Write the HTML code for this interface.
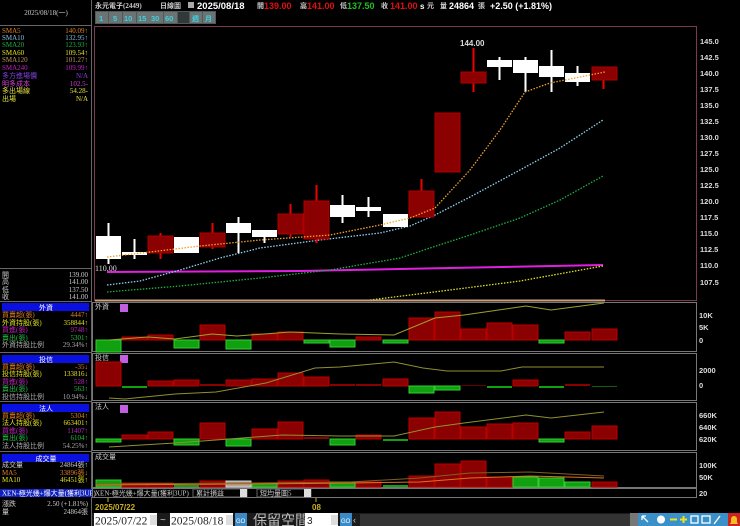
<!DOCTYPE html>
<html><head><meta charset="utf-8">
<style>
body{margin:0;background:#000;width:740px;height:526px;overflow:hidden;font-family:"Liberation Sans","Noto Sans CJK TC",sans-serif}
svg{position:absolute;left:0;top:0}
.s{font-family:"Liberation Serif","Noto Sans CJK TC",serif;font-size:7px}
</style></head><body>
<svg width="740" height="526" viewBox="0 0 740 526">
<rect x="0" y="0" width="740" height="526" fill="#000"/>
<line x1="91.5" y1="0" x2="91.5" y2="526" stroke="#666"/>
<line x1="0" y1="25.5" x2="91" y2="25.5" stroke="#666"/>
<text x="46" y="15" class="s" fill="#ccc" text-anchor="middle">2025/08/18(一)</text>
<g class="s">
<text x="2" y="33" fill="#e08020">SMA5</text><text x="88" y="33" fill="#e08020" text-anchor="end">140.09↑</text>
<text x="2" y="40" fill="#80c0e0">SMA10</text><text x="88" y="40" fill="#80c0e0" text-anchor="end">132.95↑</text>
<text x="2" y="47" fill="#20b040">SMA20</text><text x="88" y="47" fill="#20b040" text-anchor="end">123.93↑</text>
<text x="2" y="55" fill="#e0e020">SMA60</text><text x="88" y="55" fill="#e0e020" text-anchor="end">109.54↑</text>
<text x="2" y="62" fill="#c09060">SMA120</text><text x="88" y="62" fill="#c09060" text-anchor="end">101.27↑</text>
<text x="2" y="70" fill="#c020c0">SMA240</text><text x="88" y="70" fill="#c020c0" text-anchor="end">109.99↑</text>
<text x="2" y="78" fill="#8040e0">多方進場價</text><text x="88" y="78" fill="#8040e0" text-anchor="end">N/A</text>
<text x="2" y="86" fill="#d040d0">明多成本</text><text x="88" y="86" fill="#d040d0" text-anchor="end">102.5-</text>
<text x="2" y="93" fill="#e0e040">多出場線</text><text x="88" y="93" fill="#e0e040" text-anchor="end">54.28-</text>
<text x="2" y="101" fill="#e0e040">出場</text><text x="88" y="101" fill="#e0e040" text-anchor="end">N/A</text>
</g>
<line x1="0" y1="268.5" x2="91" y2="268.5" stroke="#666"/>
<g class="s" fill="#ccc">
<text x="2" y="277">開</text><text x="88" y="277" text-anchor="end">139.00</text>
<text x="2" y="284">高</text><text x="88" y="284" text-anchor="end">141.00</text>
<text x="2" y="292">低</text><text x="88" y="292" text-anchor="end">137.50</text>
<text x="2" y="299">收</text><text x="88" y="299" text-anchor="end">141.00</text>
</g>
<line x1="0" y1="301.5" x2="91" y2="301.5" stroke="#666"/>
<rect x="2" y="303" width="87" height="8" fill="#0a10e0"/><text x="46" y="310" class="s" fill="#fff" text-anchor="middle">外資</text>
<g class="s">
<text x="2" y="317" fill="#e08020">買賣超(張)</text><text x="88" y="317" fill="#e08020" text-anchor="end">4447↑</text>
<text x="2" y="325" fill="#e0e020">外資持股(張)</text><text x="88" y="325" fill="#e0e020" text-anchor="end">358844↑</text>
<text x="2" y="332" fill="#c020c0">買進(張)</text><text x="88" y="332" fill="#c020c0" text-anchor="end">9748↑</text>
<text x="2" y="340" fill="#20c040">賣出(張)</text><text x="88" y="340" fill="#20c040" text-anchor="end">5301↑</text>
<text x="2" y="347" fill="#aaa">外資持股比例</text><text x="88" y="347" fill="#aaa" text-anchor="end">29.34%↑</text>
</g>
<line x1="0" y1="352.5" x2="91" y2="352.5" stroke="#666"/>
<rect x="2" y="355" width="87" height="8" fill="#0a10e0"/><text x="46" y="362" class="s" fill="#fff" text-anchor="middle">投信</text>
<g class="s">
<text x="2" y="369" fill="#e08020">買賣超(張)</text><text x="88" y="369" fill="#e08020" text-anchor="end">-35↓</text>
<text x="2" y="376" fill="#e0e020">投信持股(張)</text><text x="88" y="376" fill="#e0e020" text-anchor="end">133816↓</text>
<text x="2" y="384" fill="#c020c0">買進(張)</text><text x="88" y="384" fill="#c020c0" text-anchor="end">528↑</text>
<text x="2" y="391" fill="#20c040">賣出(張)</text><text x="88" y="391" fill="#20c040" text-anchor="end">563↑</text>
<text x="2" y="399" fill="#aaa">投信持股比例</text><text x="88" y="399" fill="#aaa" text-anchor="end">10.94%↓</text>
</g>
<line x1="0" y1="401.5" x2="91" y2="401.5" stroke="#666"/>
<rect x="2" y="404" width="87" height="8" fill="#0a10e0"/><text x="46" y="411" class="s" fill="#fff" text-anchor="middle">法人</text>
<g class="s">
<text x="2" y="418" fill="#e08020">買賣超(張)</text><text x="88" y="418" fill="#e08020" text-anchor="end">5304↑</text>
<text x="2" y="425" fill="#e0e020">法人持股(張)</text><text x="88" y="425" fill="#e0e020" text-anchor="end">663401↑</text>
<text x="2" y="433" fill="#c020c0">買進(張)</text><text x="88" y="433" fill="#c020c0" text-anchor="end">11407↑</text>
<text x="2" y="440" fill="#20c040">賣出(張)</text><text x="88" y="440" fill="#20c040" text-anchor="end">6104↑</text>
<text x="2" y="448" fill="#aaa">法人持股比例</text><text x="88" y="448" fill="#aaa" text-anchor="end">54.25%↑</text>
</g>
<line x1="0" y1="451.5" x2="91" y2="451.5" stroke="#666"/>
<rect x="2" y="454" width="87" height="8" fill="#0a10e0"/><text x="46" y="461" class="s" fill="#fff" text-anchor="middle">成交量</text>
<g class="s">
<text x="2" y="467" fill="#ccc">成交量</text><text x="88" y="467" fill="#ccc" text-anchor="end">24864張↑</text>
<text x="2" y="475" fill="#e08020">MA5</text><text x="88" y="475" fill="#e08020" text-anchor="end">33896張↓</text>
<text x="2" y="482" fill="#e0e020">MA10</text><text x="88" y="482" fill="#e0e020" text-anchor="end">46451張↑</text>
</g>
<rect x="0" y="489" width="92" height="8" fill="#1020c0"/><text x="2" y="495.5" class="s" fill="#fff">XEN-極光幾+爆大量(獲利3UP)</text>
<text x="2" y="506" class="s" fill="#ccc">漲跌</text><text x="88" y="506" class="s" fill="#ccc" text-anchor="end">2.50 (+1.81%)</text>
<text x="2" y="514" class="s" fill="#ccc">量</text><text x="88" y="514" class="s" fill="#ccc" text-anchor="end">24864張</text>

<g font-size="8" font-weight="bold">
<text x="95" y="8" class="s" fill="#ccc">永元電子(2449)</text>
<text x="160" y="8" class="s" fill="#ccc">日線圖</text>
<rect x="188" y="2" width="6" height="6" fill="#aaa"/>
<text x="197" y="9" fill="#fff" font-size="9.5">2025/08/18</text>
<text x="257" y="8" class="s" fill="#ccc">開</text><text x="264" y="9" fill="#e01010" font-size="9">139.00</text>
<text x="300" y="8" class="s" fill="#ccc">高</text><text x="307" y="9" fill="#e01010" font-size="9">141.00</text>
<text x="340" y="8" class="s" fill="#ccc">低</text><text x="347" y="9" fill="#20c020" font-size="9">137.50</text>
<text x="381" y="8" class="s" fill="#ccc">收</text><text x="390" y="9" fill="#e01010" font-size="9">141.00</text>
<text x="420" y="9" fill="#fff" font-size="8">s</text><text x="427" y="8" class="s" fill="#ccc">元</text>
<text x="440" y="8" class="s" fill="#ccc">量</text><text x="449" y="9" fill="#fff" font-size="9">24864</text><text x="478" y="8" class="s" fill="#ccc">張</text>
<text x="490" y="9" fill="#fff" font-size="9">+2.50 (+1.81%)</text>
</g>
<g font-size="7.5" font-weight="bold" fill="#40d0e0">
<rect x="95" y="11" width="121" height="13" fill="#505858"/>
<rect x="96" y="12" width="12" height="11" fill="#6a7474"/><text x="99" y="21">1</text>
<rect x="109" y="12" width="13" height="11" fill="#6a7474"/><text x="113" y="21">5</text>
<rect x="123" y="12" width="13" height="11" fill="#6a7474"/><text x="124" y="21">10</text>
<rect x="137" y="12" width="13" height="11" fill="#6a7474"/><text x="138" y="21">15</text>
<rect x="150" y="12" width="13" height="11" fill="#6a7474"/><text x="151" y="21">30</text>
<rect x="164" y="12" width="13" height="11" fill="#6a7474"/><text x="165" y="21">60</text>
<rect x="178" y="12" width="11" height="11" fill="#303838"/>
<rect x="190" y="12" width="12" height="11" fill="#6a7474"/><text x="192" y="21" class="s">週</text>
<rect x="203" y="12" width="12" height="11" fill="#6a7474"/><text x="205" y="21" class="s">月</text>
</g>

<rect x="94.5" y="26.5" width="602" height="274" fill="none" stroke="#7a3a50"/>
<g font-size="7.5" font-weight="bold" fill="#ddd">
<text x="700" y="44">145.0</text><text x="700" y="60">142.5</text><text x="700" y="76">140.0</text><text x="700" y="92">137.5</text>
<text x="700" y="108">135.0</text><text x="700" y="124">132.5</text><text x="700" y="140">130.0</text><text x="700" y="156">127.5</text>
<text x="700" y="172">125.0</text><text x="700" y="188">122.5</text><text x="700" y="204">120.0</text><text x="700" y="220">117.5</text>
<text x="700" y="236">115.0</text><text x="700" y="252">112.5</text><text x="700" y="268">110.0</text><text x="700" y="285">107.5</text>
</g>
<polyline points="107,272 300,271 450,268 603,265" fill="none" stroke="#e020e0" stroke-width="2"/>
<polyline points="107,292 180,286 260,278 330,270 400,258 430,248 470,235 520,218 560,200 603,176" fill="none" stroke="#20b040" stroke-width="1.3" stroke-dasharray="1.5,1.5"/>
<polyline points="107,285 140,281 180,270 220,258 260,248 320,240 380,233 410,226 435,215 470,197 520,170 560,148 603,120" fill="none" stroke="#90d0f0" stroke-width="1.3" stroke-dasharray="1.5,1.5"/>
<polyline points="370,300 450,290 520,281 603,266" fill="none" stroke="#e0e020" stroke-width="1.3" stroke-dasharray="1.5,1.5"/>
<line x1="95" y1="300.5" x2="605" y2="300.5" stroke="#c8a080" stroke-width="2"/>
<g>
<rect x="107.5" y="223" width="2" height="41" fill="#fff"/><rect x="96" y="236" width="25" height="23" fill="#fff"/>
<rect x="133.5" y="239" width="2" height="20" fill="#fff"/><rect x="122" y="252" width="25" height="3" fill="#fff"/>
<rect x="159.5" y="233" width="2" height="26" fill="#e00"/><rect x="148" y="236" width="25" height="17" fill="#8b0000" stroke="#b00000"/>
<rect x="174" y="237" width="25" height="16" fill="#fff"/>
<rect x="211.5" y="223" width="2" height="26" fill="#e00"/><rect x="200" y="233" width="25" height="14" fill="#8b0000" stroke="#b00000"/>
<rect x="237.5" y="217" width="2" height="36" fill="#fff"/><rect x="226" y="223" width="25" height="10" fill="#fff"/>
<rect x="263.5" y="230" width="2" height="13" fill="#fff"/><rect x="252" y="230" width="25" height="7" fill="#fff"/>
<rect x="289.5" y="204" width="2" height="33" fill="#e00"/><rect x="278" y="214" width="25" height="20" fill="#8b0000" stroke="#b00000"/>
<rect x="315.5" y="185" width="2" height="58" fill="#e00"/><rect x="304" y="201" width="25" height="38" fill="#8b0000" stroke="#b00000"/>
<rect x="341.5" y="195" width="2" height="28" fill="#fff"/><rect x="330" y="205" width="25" height="12" fill="#fff"/>
<rect x="367.5" y="197" width="2" height="20" fill="#fff"/><rect x="356" y="207" width="25" height="4" fill="#fff"/>
<rect x="383" y="214" width="25" height="13" fill="#fff"/>
<rect x="420.5" y="179" width="2" height="38" fill="#e00"/><rect x="409" y="191" width="25" height="26" fill="#8b0000" stroke="#b00000"/>
<rect x="435" y="113" width="25" height="59" fill="#8b0000" stroke="#b00000"/>
<rect x="472.5" y="48" width="2" height="44" fill="#e00"/><rect x="461" y="72" width="25" height="11" fill="#8b0000" stroke="#b00000"/>
<rect x="498.5" y="57" width="2" height="23" fill="#fff"/><rect x="487" y="60" width="25" height="7" fill="#fff"/>
<rect x="524.5" y="57" width="2" height="35" fill="#fff"/><rect x="513" y="60" width="25" height="13" fill="#fff"/>
<rect x="550.5" y="50" width="2" height="42" fill="#fff"/><rect x="539" y="66" width="25" height="11" fill="#fff"/>
<rect x="576.5" y="66" width="2" height="20" fill="#fff"/><rect x="565" y="73" width="25" height="9" fill="#fff"/>
<rect x="602.5" y="76" width="2" height="13" fill="#e00"/><rect x="592" y="67" width="25" height="13" fill="#8b0000" stroke="#b00000"/>
</g>
<polyline points="107,257 150,252 200,246 260,240 330,235 380,225 410,218 435,208 470,170 500,130 525,92 550,83 580,77 605,72" fill="none" stroke="#f0a030" stroke-width="1.3" stroke-dasharray="1.5,1.5"/>
<text x="95" y="271" style="font-size:8px" fill="#ddd" class="s">110.00</text>
<text x="460" y="46" font-size="8" fill="#ddd" font-weight="bold">144.00</text>

<g stroke="#777" fill="none">
<rect x="92.5" y="302.5" width="604" height="49"/>
<rect x="92.5" y="353.5" width="604" height="47"/>
<rect x="92.5" y="402.5" width="604" height="48"/>
<rect x="92.5" y="452.5" width="604" height="35"/>
<rect x="92.5" y="488.5" width="604" height="9"/>
</g>
<g class="s" fill="#ccc">
<text x="95" y="309">外資</text><text x="95" y="360">投信</text><text x="95" y="409">法人</text><text x="95" y="459">成交量</text>
</g>
<g fill="#c060e0"><rect x="120" y="304" width="8" height="8"/><rect x="120" y="355" width="8" height="8"/><rect x="120" y="405" width="8" height="8"/></g>
<g font-size="7.5" font-weight="bold" fill="#ddd">
<text x="699" y="318">10K</text><text x="699" y="330">5K</text><text x="699" y="343">0</text>
<text x="699" y="373">2000</text><text x="699" y="388">0</text>
<text x="699" y="418">660K</text><text x="699" y="430">640K</text><text x="699" y="442">620K</text>
<text x="699" y="468">100K</text><text x="699" y="480">50K</text><text x="699" y="496">20</text>
</g>
<g stroke-width="1">
<rect x="96" y="340" width="25" height="12" fill="#10a010" stroke="#30d030"/>
<rect x="122" y="337" width="25" height="3" fill="#8b0000" stroke="#b00"/>
<rect x="148" y="335" width="25" height="5" fill="#8b0000" stroke="#b00"/>
<rect x="174" y="340" width="25" height="8" fill="#10a010" stroke="#30d030"/>
<rect x="200" y="325" width="25" height="15" fill="#8b0000" stroke="#b00"/>
<rect x="226" y="340" width="25" height="9" fill="#10a010" stroke="#30d030"/>
<rect x="252" y="334" width="25" height="6" fill="#8b0000" stroke="#b00"/>
<rect x="278" y="332" width="25" height="8" fill="#8b0000" stroke="#b00"/>
<rect x="304" y="340" width="25" height="3" fill="#10a010" stroke="#30d030"/>
<rect x="330" y="340" width="25" height="7" fill="#10a010" stroke="#30d030"/>
<rect x="356" y="337" width="25" height="3" fill="#8b0000" stroke="#b00"/>
<rect x="383" y="340" width="25" height="3" fill="#10a010" stroke="#30d030"/>
<rect x="409" y="318" width="25" height="22" fill="#8b0000" stroke="#b00"/>
<rect x="435" y="312" width="25" height="28" fill="#8b0000" stroke="#b00"/>
<rect x="461" y="329" width="25" height="11" fill="#8b0000" stroke="#b00"/>
<rect x="487" y="323" width="25" height="17" fill="#8b0000" stroke="#b00"/>
<rect x="513" y="325" width="25" height="15" fill="#8b0000" stroke="#b00"/>
<rect x="539" y="340" width="25" height="3" fill="#10a010" stroke="#30d030"/>
<rect x="565" y="332" width="25" height="8" fill="#8b0000" stroke="#b00"/>
<rect x="592" y="329" width="25" height="11" fill="#8b0000" stroke="#b00"/>
</g>
<polyline points="109,340 148,337 175,339 212,334 237,336 290,332 340,334 394,335 435,318 464,315 526,306 551,310 604,303" fill="none" stroke="#a0a030" stroke-width="1"/>
<g>
<rect x="96" y="362" width="25" height="24" fill="#8b0000" stroke="#b00"/>
<rect x="122" y="386" width="25" height="2" fill="#10a010"/>
<rect x="148" y="381" width="25" height="5" fill="#8b0000" stroke="#b00"/>
<rect x="174" y="380" width="25" height="6" fill="#8b0000" stroke="#b00"/>
<rect x="200" y="384" width="25" height="2" fill="#8b0000"/>
<rect x="226" y="380" width="25" height="6" fill="#8b0000" stroke="#b00"/>
<rect x="252" y="379" width="25" height="7" fill="#8b0000" stroke="#b00"/>
<rect x="278" y="373" width="25" height="13" fill="#8b0000" stroke="#b00"/>
<rect x="304" y="377" width="25" height="9" fill="#8b0000" stroke="#b00"/>
<rect x="330" y="384" width="25" height="2" fill="#8b0000"/>
<rect x="356" y="384" width="25" height="2" fill="#8b0000"/>
<rect x="383" y="379" width="25" height="7" fill="#8b0000" stroke="#b00"/>
<rect x="409" y="386" width="25" height="7" fill="#10a010" stroke="#30d030"/>
<rect x="435" y="386" width="25" height="4" fill="#10a010" stroke="#30d030"/>
<rect x="461" y="385" width="25" height="1" fill="#600"/>
<rect x="487" y="386" width="25" height="2" fill="#10a010"/>
<rect x="513" y="380" width="25" height="6" fill="#8b0000" stroke="#b00"/>
<rect x="539" y="386" width="25" height="2" fill="#10a010"/>
<rect x="565" y="384" width="25" height="2" fill="#8b0000"/>
<rect x="592" y="386" width="25" height="1" fill="#106010"/>
</g>
<polyline points="109,398 125,399 175,394 216,392 266,383 315,368 340,367 394,362 423,368 447,371 501,371 522,367 604,367" fill="none" stroke="#909030" stroke-width="1"/>
<g>
<rect x="96" y="439" width="25" height="3" fill="#10a010" stroke="#30d030"/>
<rect x="122" y="435" width="25" height="4" fill="#8b0000" stroke="#b00"/>
<rect x="148" y="432" width="25" height="7" fill="#8b0000" stroke="#b00"/>
<rect x="174" y="439" width="25" height="6" fill="#10a010" stroke="#30d030"/>
<rect x="200" y="423" width="25" height="16" fill="#8b0000" stroke="#b00"/>
<rect x="226" y="439" width="25" height="7" fill="#10a010" stroke="#30d030"/>
<rect x="252" y="429" width="25" height="10" fill="#8b0000" stroke="#b00"/>
<rect x="278" y="422" width="25" height="17" fill="#8b0000" stroke="#b00"/>
<rect x="304" y="437" width="25" height="2" fill="#8b0000"/>
<rect x="330" y="439" width="25" height="6" fill="#10a010" stroke="#30d030"/>
<rect x="356" y="435" width="25" height="4" fill="#8b0000" stroke="#b00"/>
<rect x="383" y="439" width="25" height="2" fill="#10a010"/>
<rect x="409" y="418" width="25" height="21" fill="#8b0000" stroke="#b00"/>
<rect x="435" y="412" width="25" height="27" fill="#8b0000" stroke="#b00"/>
<rect x="461" y="427" width="25" height="12" fill="#8b0000" stroke="#b00"/>
<rect x="487" y="424" width="25" height="15" fill="#8b0000" stroke="#b00"/>
<rect x="513" y="423" width="25" height="16" fill="#8b0000" stroke="#b00"/>
<rect x="539" y="439" width="25" height="3" fill="#10a010" stroke="#30d030"/>
<rect x="565" y="432" width="25" height="7" fill="#8b0000" stroke="#b00"/>
<rect x="592" y="426" width="25" height="13" fill="#8b0000" stroke="#b00"/>
</g>
<polyline points="109,447 175,443 216,440 282,435 340,436 394,436 435,427 464,423 526,415 551,418 604,412" fill="none" stroke="#909030" stroke-width="1"/>
<g>
<rect x="96" y="480" width="25" height="7" fill="#10a010" stroke="#30d030"/>
<rect x="122" y="483" width="25" height="4" fill="#8b0000" stroke="#b00"/>
<rect x="148" y="483" width="25" height="4" fill="#8b0000" stroke="#b00"/>
<rect x="174" y="485" width="25" height="2" fill="#10a010"/>
<rect x="200" y="481" width="25" height="6" fill="#8b0000" stroke="#b00"/>
<rect x="226" y="481" width="25" height="6" fill="#aaa" stroke="#ccc"/>
<rect x="252" y="483" width="25" height="4" fill="#10a010" stroke="#30d030"/>
<rect x="278" y="481" width="25" height="6" fill="#8b0000" stroke="#b00"/>
<rect x="304" y="480" width="25" height="7" fill="#8b0000" stroke="#b00"/>
<rect x="330" y="482" width="25" height="5" fill="#10a010" stroke="#30d030"/>
<rect x="356" y="482" width="25" height="5" fill="#8b0000" stroke="#b00"/>
<rect x="383" y="485" width="25" height="2" fill="#10a010"/>
<rect x="409" y="476" width="25" height="11" fill="#8b0000" stroke="#b00"/>
<rect x="435" y="464" width="25" height="23" fill="#8b0000" stroke="#b00"/>
<rect x="461" y="461" width="25" height="26" fill="#8b0000" stroke="#b00"/>
<rect x="487" y="477" width="25" height="10" fill="#8b0000" stroke="#b00"/>
<rect x="513" y="477" width="25" height="10" fill="#10a010" stroke="#30d030"/>
<rect x="539" y="478" width="25" height="9" fill="#10a010" stroke="#30d030"/>
<rect x="565" y="482" width="25" height="5" fill="#10a010" stroke="#30d030"/>
<rect x="592" y="482" width="25" height="5" fill="#8b0000" stroke="#b00"/>
</g>
<polyline points="96,484 250,483 350,482 420,478 470,473 530,472 604,476" fill="none" stroke="#806020" stroke-width="1"/>
<polyline points="96,485 250,484 350,483 420,482 470,478 530,476 604,478" fill="none" stroke="#e07020" stroke-width="1"/>
<text x="95" y="495.5" class="s" fill="#ccc">XEN-極光幾+爆大量(獲利3UP)</text>
<rect x="193" y="489" width="54" height="8" fill="#000" stroke="#666"/><text x="196" y="495.5" class="s" fill="#ccc">累計損益</text><rect x="240" y="489" width="7" height="8" fill="#ddd"/>
<rect x="257" y="489" width="54" height="8" fill="#000" stroke="#666"/><text x="260" y="495.5" class="s" fill="#ccc">短均量圖5</text><rect x="304" y="489" width="7" height="8" fill="#ddd"/>
<text x="95" y="510" font-size="8" fill="#c8b020" font-weight="bold">2025/07/22</text>
<text x="312" y="510" font-size="8" fill="#c8b020" font-weight="bold">08</text>
<line x1="108" y1="498" x2="108" y2="502" stroke="#c8b020"/><line x1="316" y1="498" x2="316" y2="502" stroke="#c8b020"/>
<rect x="92" y="513" width="540" height="13" fill="#1a1a1a"/>
<rect x="94" y="513" width="63" height="13" fill="#fff"/><text x="95" y="524.5" style="font-size:11.5px" fill="#222" class="s">2025/07/22</text><rect x="150" y="515" width="7" height="10" fill="#ddd"/>
<text x="160" y="523" fill="#ccc" font-size="10">~</text>
<rect x="170" y="513" width="63" height="13" fill="#fff"/><text x="171" y="524.5" style="font-size:11.5px" fill="#222" class="s">2025/08/18</text><rect x="226" y="515" width="7" height="10" fill="#ddd"/>
<rect x="235" y="513" width="12" height="13" fill="#3a8ac8"/><text x="236" y="523" font-size="6" fill="#fff">GO</text>
<text x="253" y="525" style="font-size:14px" fill="#bbb" class="s">保留空間</text>
<rect x="305" y="513" width="33" height="13" fill="#fff"/><text x="307" y="524" font-size="10" fill="#222">3</text><rect x="331" y="515" width="7" height="10" fill="#ddd"/>
<rect x="340" y="513" width="12" height="13" fill="#3a8ac8"/><text x="341" y="523" font-size="6" fill="#fff">GO</text>
<text x="353" y="523" font-size="9" fill="#ccc">‹</text>
<rect x="360" y="514" width="270" height="12" fill="#333"/>
<rect x="630" y="513" width="8" height="13" fill="#777"/>
<rect x="638" y="513" width="90" height="13" fill="#3a90c8"/>
<g stroke="#fff" stroke-width="1.3" fill="none">
<path d="M642,516 L648,522 M642,516 L646,516 M642,516 L642,520"/>
<circle cx="661" cy="519.5" r="4" fill="#fff" stroke="none"/>
<path d="M670,519.5 H677" stroke="#f0e020" stroke-width="2"/>
<path d="M680,519.5 H687 M683.5,516 V523" stroke="#f0e020" stroke-width="2"/>
<rect x="691" y="516" width="7" height="7"/>
<rect x="702" y="516" width="8" height="7"/>
<path d="M714,524 L720,516"/>
</g>
<rect x="728" y="513" width="12" height="13" fill="#d02020"/>
<path d="M730,524 h8 l-1,-2 v-3 a3,3 0 0 0 -6,0 v3 z" fill="#f0c020"/>
</svg>
</body></html>
